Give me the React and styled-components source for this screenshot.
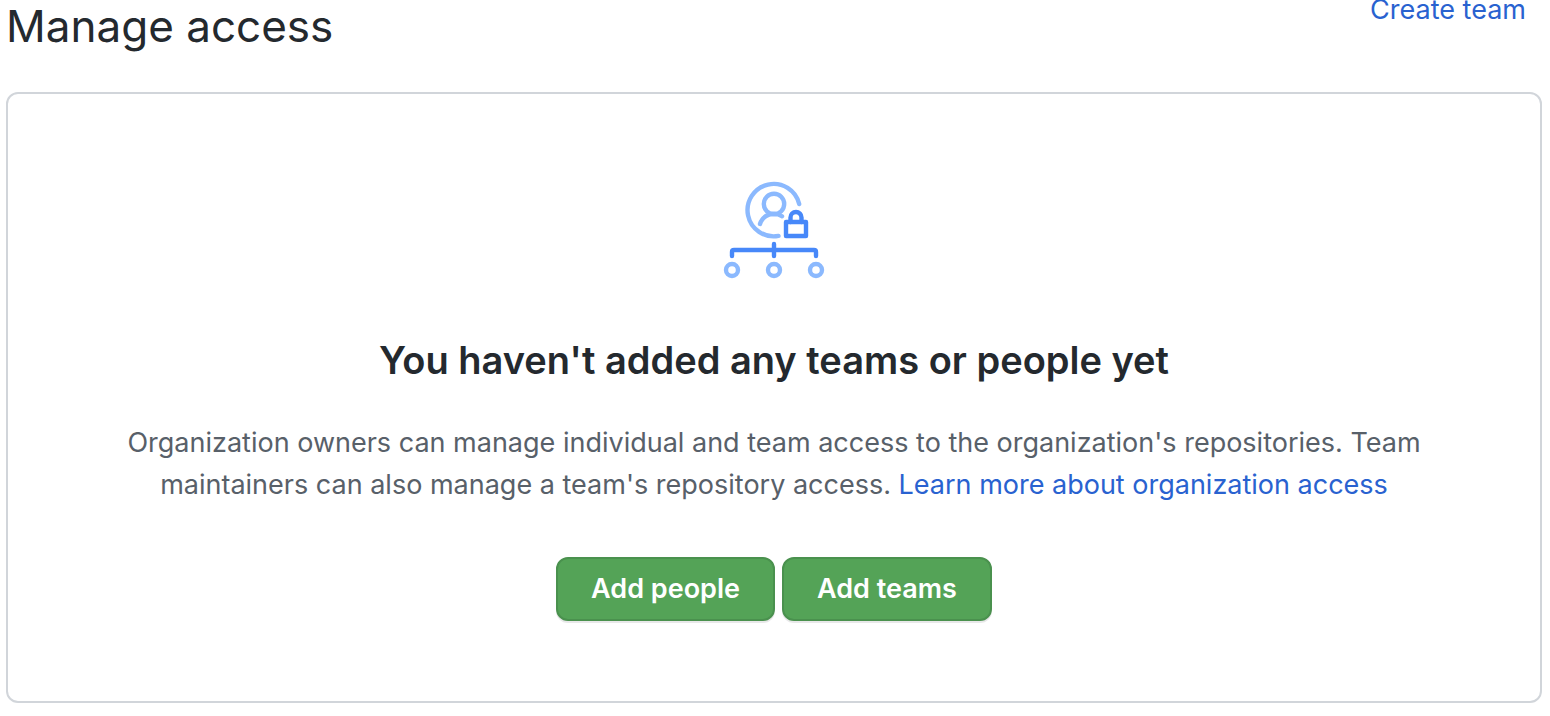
import React from "react";
import styled, { createGlobalStyle } from "styled-components";

const GlobalStyle = createGlobalStyle`
  *, *::before, *::after { box-sizing: border-box; }
  body {
    margin: 0;
    background: #ffffff;
    color: #24292e;
    font-family: Inter, "Liberation Sans", sans-serif;
  }
`;

const Page = styled.main`
  padding: 0 8px 12px 6px;
`;

const Header = styled.header`
  display: flex;
  justify-content: space-between;
  align-items: flex-start;
  padding: 0 16px 40px 0;
`;

const Title = styled.h1`
  margin: 0;
  font-size: 44px;
  line-height: 52px;
  font-weight: 400;
`;

const Link = styled.a`
  color: #2962d0;
  text-decoration: none;
  &:hover { text-decoration: underline; }
`;

const HeaderLink = styled(Link)`
  font-size: 27px;
  line-height: 20px;
`;

const Blankslate = styled.section`
  display: flex;
  flex-direction: column;
  align-items: center;
  padding: 80px 64px;
  border: 2px solid #d1d5da;
  border-radius: 12px;
  text-align: center;
`;

const Heading = styled.h2`
  margin: 44px 0 0;
  font-size: 38px;
  line-height: 60px;
  font-weight: 600;
`;

const Description = styled.p`
  margin: 32px 0 0;
  max-width: 1340px;
  color: #586069;
  font-size: 27px;
  line-height: 42px;
`;

const Actions = styled.div`
  display: flex;
  gap: 7px;
  margin-top: 51px;
`;

const Button = styled.button`
  height: 64px;
  padding: 0 33px;
  border: 2px solid #4a914e;
  border-radius: 12px;
  background: #54a357;
  box-shadow: 0 2px 0 rgba(27, 31, 35, 0.1);
  color: #ffffff;
  font-family: inherit;
  font-size: 27px;
  font-weight: 600;
  line-height: 40px;
  cursor: pointer;
`;

const AccessIcon = () => (
  <svg width="112" height="112" viewBox="0 0 112 112" fill="none" strokeWidth="4.4" strokeLinecap="round" strokeLinejoin="round" aria-hidden="true">
    <g stroke="#8bb9fe">
      <path d="M81.2 30A26.2 26.2 0 1 0 60.5 61.9" />
      <circle cx="56" cy="30" r="10.2" />
      <path d="M42 50A14.5 14.5 0 0 1 64 42.3" />
      <circle cx="14" cy="96" r="6" />
      <circle cx="56" cy="96" r="6" />
      <circle cx="98" cy="96" r="6" />
    </g>
    <g stroke="#4788f9">
      <path d="M14 82V78Q14 76 16 76H96Q98 76 98 78V82M56 70V82" />
      <rect x="68" y="48" width="20" height="14" />
      <path d="M72.5 48V43.5A5.5 5.5 0 0 1 83.5 43.5V48" />
    </g>
  </svg>
);

export default function App() {
  return (
    <>
      <GlobalStyle />
      <Page>
        <Header>
          <Title>Manage access</Title>
          <HeaderLink href="#create-team">Create team</HeaderLink>
        </Header>
        <Blankslate>
          <AccessIcon />
          <Heading>You haven't added any teams or people yet</Heading>
          <Description>
            Organization owners can manage individual and team access to the organization's repositories. Team
            maintainers can also manage a team's repository access.{" "}
            <Link href="#learn-more">Learn more about organization access</Link>
          </Description>
          <Actions>
            <Button type="button">Add people</Button>
            <Button type="button">Add teams</Button>
          </Actions>
        </Blankslate>
      </Page>
    </>
  );
}
